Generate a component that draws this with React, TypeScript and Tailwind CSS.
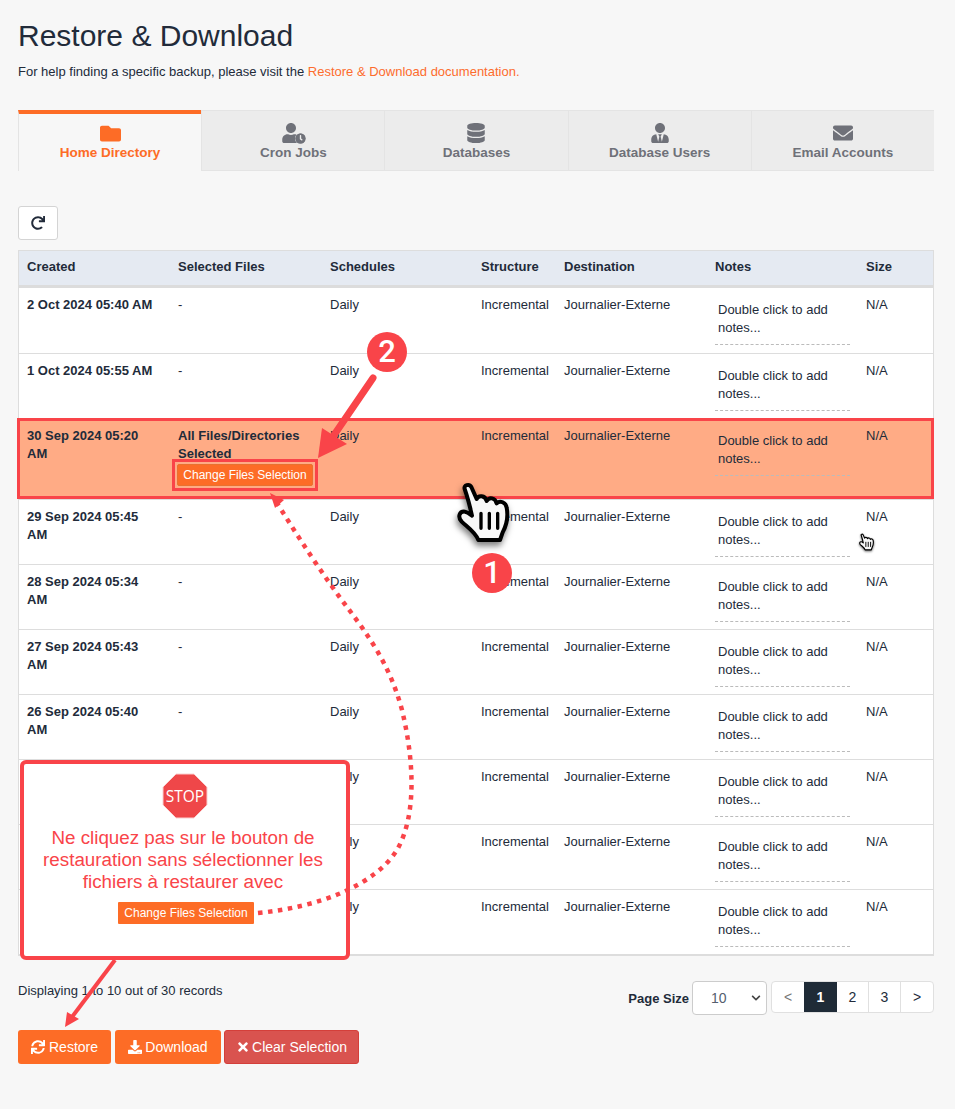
import React from 'react';
import { FaFolder, FaDatabase, FaEnvelope, FaUserTie, FaUser, FaClock, FaSync, FaDownload, FaTimes, FaRedo, FaChevronDown } from 'react-icons/fa';

const GRID = 'grid grid-cols-[151px_152px_151px_83px_151px_151px_1fr]';

interface Row {
  created: string;
  height: string;
  selected?: boolean;
}

// the last three rows sit under the STOP callout, their dates can't be read
const rows: Row[] = [
  { created: '2 Oct 2024 05:40 AM', height: 'h-[66px]' },
  { created: '1 Oct 2024 05:55 AM', height: 'h-[65px]' },
  { created: '30 Sep 2024 05:20 AM', height: 'h-[81px]', selected: true },
  { created: '29 Sep 2024 05:45 AM', height: 'h-[65px]' },
  { created: '28 Sep 2024 05:34 AM', height: 'h-[65px]' },
  { created: '27 Sep 2024 05:43 AM', height: 'h-[65px]' },
  { created: '26 Sep 2024 05:40 AM', height: 'h-[65px]' },
  { created: '', height: 'h-[65px]' },
  { created: '', height: 'h-[65px]' },
  { created: '', height: 'h-[65px]' },
];

const tabs = [
  { label: 'Home Directory', icon: <FaFolder className="text-[21px]" />, active: true },
  {
    label: 'Cron Jobs',
    icon: (
      <span className="relative block w-[25px] h-[21px]">
        <FaUser className="text-[20px]" />
        <FaClock className="absolute right-0 bottom-0 text-[11px] rounded-full bg-[#ececec]" />
      </span>
    ),
  },
  { label: 'Databases', icon: <FaDatabase className="text-[20px]" /> },
  { label: 'Database Users', icon: <FaUserTie className="text-[20px]" /> },
  { label: 'Email Accounts', icon: <FaEnvelope className="text-[20px]" /> },
];

const HAND =
  'M44 42C40 30 58 25 64 36L80 72C85 60 105 60 110 78C118 65 135 68 140 85C150 75 168 82 170 98C175 125 170 150 158 172L150 195L85 195C75 170 50 155 35 140C22 125 28 108 45 110C52 111 58 116 66 122C60 95 52 65 44 42Z';

const HandCursor = ({ className }: { className: string }) => (
  <svg viewBox="0 0 210 225" className={className}>
    <path d={HAND} fill="#f8f8f8" stroke="#000" strokeWidth="12" strokeLinejoin="round" />
    <path d="M93 115V160M118 115V160M143 115V160" stroke="#000" strokeWidth="10" strokeLinecap="round" fill="none" />
  </svg>
);

const Annotations = () => (
  <>
    <div className="absolute left-[367px] top-[332px] w-[40px] h-[40px] rounded-full bg-[#f94449] flex items-center justify-center text-white text-[31px] font-medium font-['Roboto',sans-serif]">2</div>
    <div className="absolute left-[472px] top-[553px] w-[40px] h-[40px] rounded-full bg-[#f94449] flex items-center justify-center text-white text-[31px] font-medium font-['Roboto',sans-serif]">1</div>

    <HandCursor className="absolute left-[450px] top-[475px] w-[70px] h-[75px] drop-shadow-[-1px_4px_3px_rgba(0,0,0,0.5)]" />
    <HandCursor className="absolute left-[857px] top-[531px] w-[20px] h-[22px] drop-shadow-[0_1px_1px_rgba(0,0,0,0.6)]" />

    <div className="absolute left-[20px] top-[760px] w-[330px] h-[200px] bg-white border-4 border-[#f94449] rounded-[6px] flex flex-col items-center pt-[9px]">
      <svg viewBox="0 0 46 46" className="w-[46px] h-[46px] shrink-0">
        <polygon points="14,1 32,1 45,14 45,32 32,45 14,45 1,32 1,14" fill="#ef4749" stroke="#fbd0d0" strokeWidth="1" />
        <text x="23" y="29" textAnchor="middle" fill="#fff" fontSize="15.500" fontFamily="'Open Sans', sans-serif">STOP</text>
      </svg>
      <p className="mt-[8px] -ml-[4px] w-[300px] text-center text-[#f94449] text-[18.800px] leading-[22px]">
        Ne cliquez pas sur le bouton de restauration sans sélectionner les fichiers à restaurer avec
      </p>
      <div className="mt-[9px] ml-[2px] w-[136px] h-[22px] bg-[#fd6c26] text-white text-[12px] flex items-center justify-center rounded-[1px]">
        Change Files Selection
      </div>
    </div>

    <svg viewBox="0 0 955 1109" className="absolute left-0 top-0 w-[955px] h-[1109px] pointer-events-none">
      <path
        d="M258 913C320 907 375 885 397 850C417 815 414 760 402 710C390 665 368 635 347 607C325 578 300 540 277 503"
        fill="none"
        stroke="#f94449"
        strokeWidth="4.500"
        strokeDasharray="4.500 5.500"
      />
      <polygon points="270,493 284,500 275,508" fill="#f94449" />
      <line x1="373" y1="378" x2="332" y2="438" stroke="#f94449" strokeWidth="7" strokeLinecap="round" />
      <polygon points="318,458 322,428 347,444" fill="#f94449" />
      <line x1="115" y1="960" x2="72" y2="1017" stroke="#f94449" strokeWidth="4" />
      <polygon points="65,1027 67,1012 79,1019" fill="#f94449" />
    </svg>
  </>
);

export default function App() {
  return (
    <div className="relative w-[955px] h-[1109px] overflow-hidden bg-[#f7f7f7] text-[#222b3a] font-['Liberation_Sans',Arial,sans-serif]">
      <div className="pl-[18px] pr-[21px]">
        <h1 className="pt-[18px] text-[30px] leading-[36px] text-[#222b3a]">Restore &amp; Download</h1>
        <p className="mt-[9px] text-[13px] leading-[18px]">
          For help finding a specific backup, please visit the{' '}
          <a className="text-[#fd6c2d]">Restore &amp; Download documentation.</a>
        </p>

        <div className="mt-[29px] grid grid-cols-5 h-[61px]">
          {tabs.map((tab) => (
            <div
              key={tab.label}
              className={
                tab.active
                  ? 'border-t-4 border-l border-t-[#fd6c26] border-l-[#e4e4e4] text-[#fd6c26] flex flex-col items-center pt-[8px]'
                  : 'border-t border-b border-l border-[#e4e4e4] bg-[#ececec] text-[#6f7179] flex flex-col items-center pt-[11px]'
              }
            >
              <div className="h-[22px] flex items-center">{tab.icon}</div>
              <span className="mt-[1px] text-[13.500px] font-bold leading-[16px]">{tab.label}</span>
            </div>
          ))}
        </div>

        <button className="mt-[35px] w-[40px] h-[34px] bg-white border border-[#d4d4d4] rounded-[3px] flex items-center justify-center text-[#222b3a]">
          <FaRedo className="text-[14px]" />
        </button>

        <div className="mt-[10px] border border-[#dddddd] text-[13px] leading-[18.400px]">
          <div className={`${GRID} h-[37px] bg-[#e5eaf2] border-b-[3px] border-[#dcdcdc] font-bold items-center`}>
            {['Created', 'Selected Files', 'Schedules', 'Structure', 'Destination', 'Notes', 'Size'].map((h) => (
              <div key={h} className="pl-[8px] pb-[1px]">{h}</div>
            ))}
          </div>

          {rows.map((row, i) => (
            <div
              key={i}
              className={`${GRID} ${row.height} border-b border-[#dddddd] pt-[8px] ${row.selected ? 'bg-[#ffab85]' : 'bg-white'}`}
            >
              <div className="pl-[8px] pr-[15px] font-bold">{row.created}</div>
              <div className="pl-[8px] pr-[6px]">
                {row.selected ? (
                  <>
                    <div className="font-bold">All Files/Directories Selected</div>
                    <div className="-ml-[1px] w-[136px] h-[22px] bg-[#fd6c26] border border-[#e8722f] rounded-[2px] text-white text-[12px] flex items-center justify-center">
                      Change Files Selection
                    </div>
                  </>
                ) : row.created ? (
                  '-'
                ) : null}
              </div>
              <div className="pl-[8px]">Daily</div>
              <div className="pl-[8px]">Incremental</div>
              <div className="pl-[8px]">Journalier-Externe</div>
              <div className="pl-[8px]">
                <div className="w-[135px] h-[49px] pl-[3px] pt-[5px] border-b border-dashed border-[#bbbbbb]">
                  Double click to add notes...
                </div>
              </div>
              <div className="pl-[8px]">N/A</div>
            </div>
          ))}
        </div>

        <div className="flex justify-between items-start mt-[25px]">
          <div className="mt-[1px] text-[13px] leading-[18px]">Displaying 1 to 10 out of 30 records</div>
          <div className="flex items-start">
            <span className="mt-[9px] mr-[3px] text-[13px] font-bold leading-[18px]">Page Size</span>
            <div className="w-[75px] h-[34px] bg-white border border-[#cccccc] rounded-[4px] flex items-center justify-between pl-[18px] pr-[5px] text-[#555e6e] text-[14px]">
              10
              <FaChevronDown className="text-[10px] text-[#444444]" />
            </div>
            <div className="ml-[4px] h-[32px] flex bg-white border border-[#e0e0e0] rounded-[4px] text-[14px]">
              <div className="w-[32px] flex items-center justify-center text-[#777777]">&lt;</div>
              <div className="w-[33px] flex items-center justify-center bg-[#1f2b37] text-white font-bold">1</div>
              <div className="w-[32px] flex items-center justify-center border-r border-[#e0e0e0]">2</div>
              <div className="w-[32px] flex items-center justify-center border-r border-[#e0e0e0]">3</div>
              <div className="w-[32px] flex items-center justify-center">&gt;</div>
            </div>
          </div>
        </div>

        <div className="mt-[15px] flex gap-[4px] text-[14px] text-white">
          <button className="w-[93px] h-[34px] bg-[#fd6c26] rounded-[3px] flex items-center justify-center gap-[4px]">
            <FaSync className="text-[14px]" /> Restore
          </button>
          <button className="w-[106px] h-[34px] bg-[#fd6c26] rounded-[3px] flex items-center justify-center gap-[3px]">
            <FaDownload className="text-[14px]" /> Download
          </button>
          <button className="-ml-[1px] w-[135px] h-[34px] bg-[#d9534f] border border-[#d43f3a] rounded-[3px] flex items-center justify-center gap-[2px]">
            <FaTimes className="text-[14px]" /> Clear Selection
          </button>
        </div>
      </div>

      <div className="absolute left-[17px] top-[418px] w-[917px] h-[81px] border-[3px] border-[#f94449] pointer-events-none" />
      <div className="absolute left-[172px] top-[459px] w-[146px] h-[32px] border-[3px] border-[#f94449] pointer-events-none" />

      <Annotations />
    </div>
  );
}
